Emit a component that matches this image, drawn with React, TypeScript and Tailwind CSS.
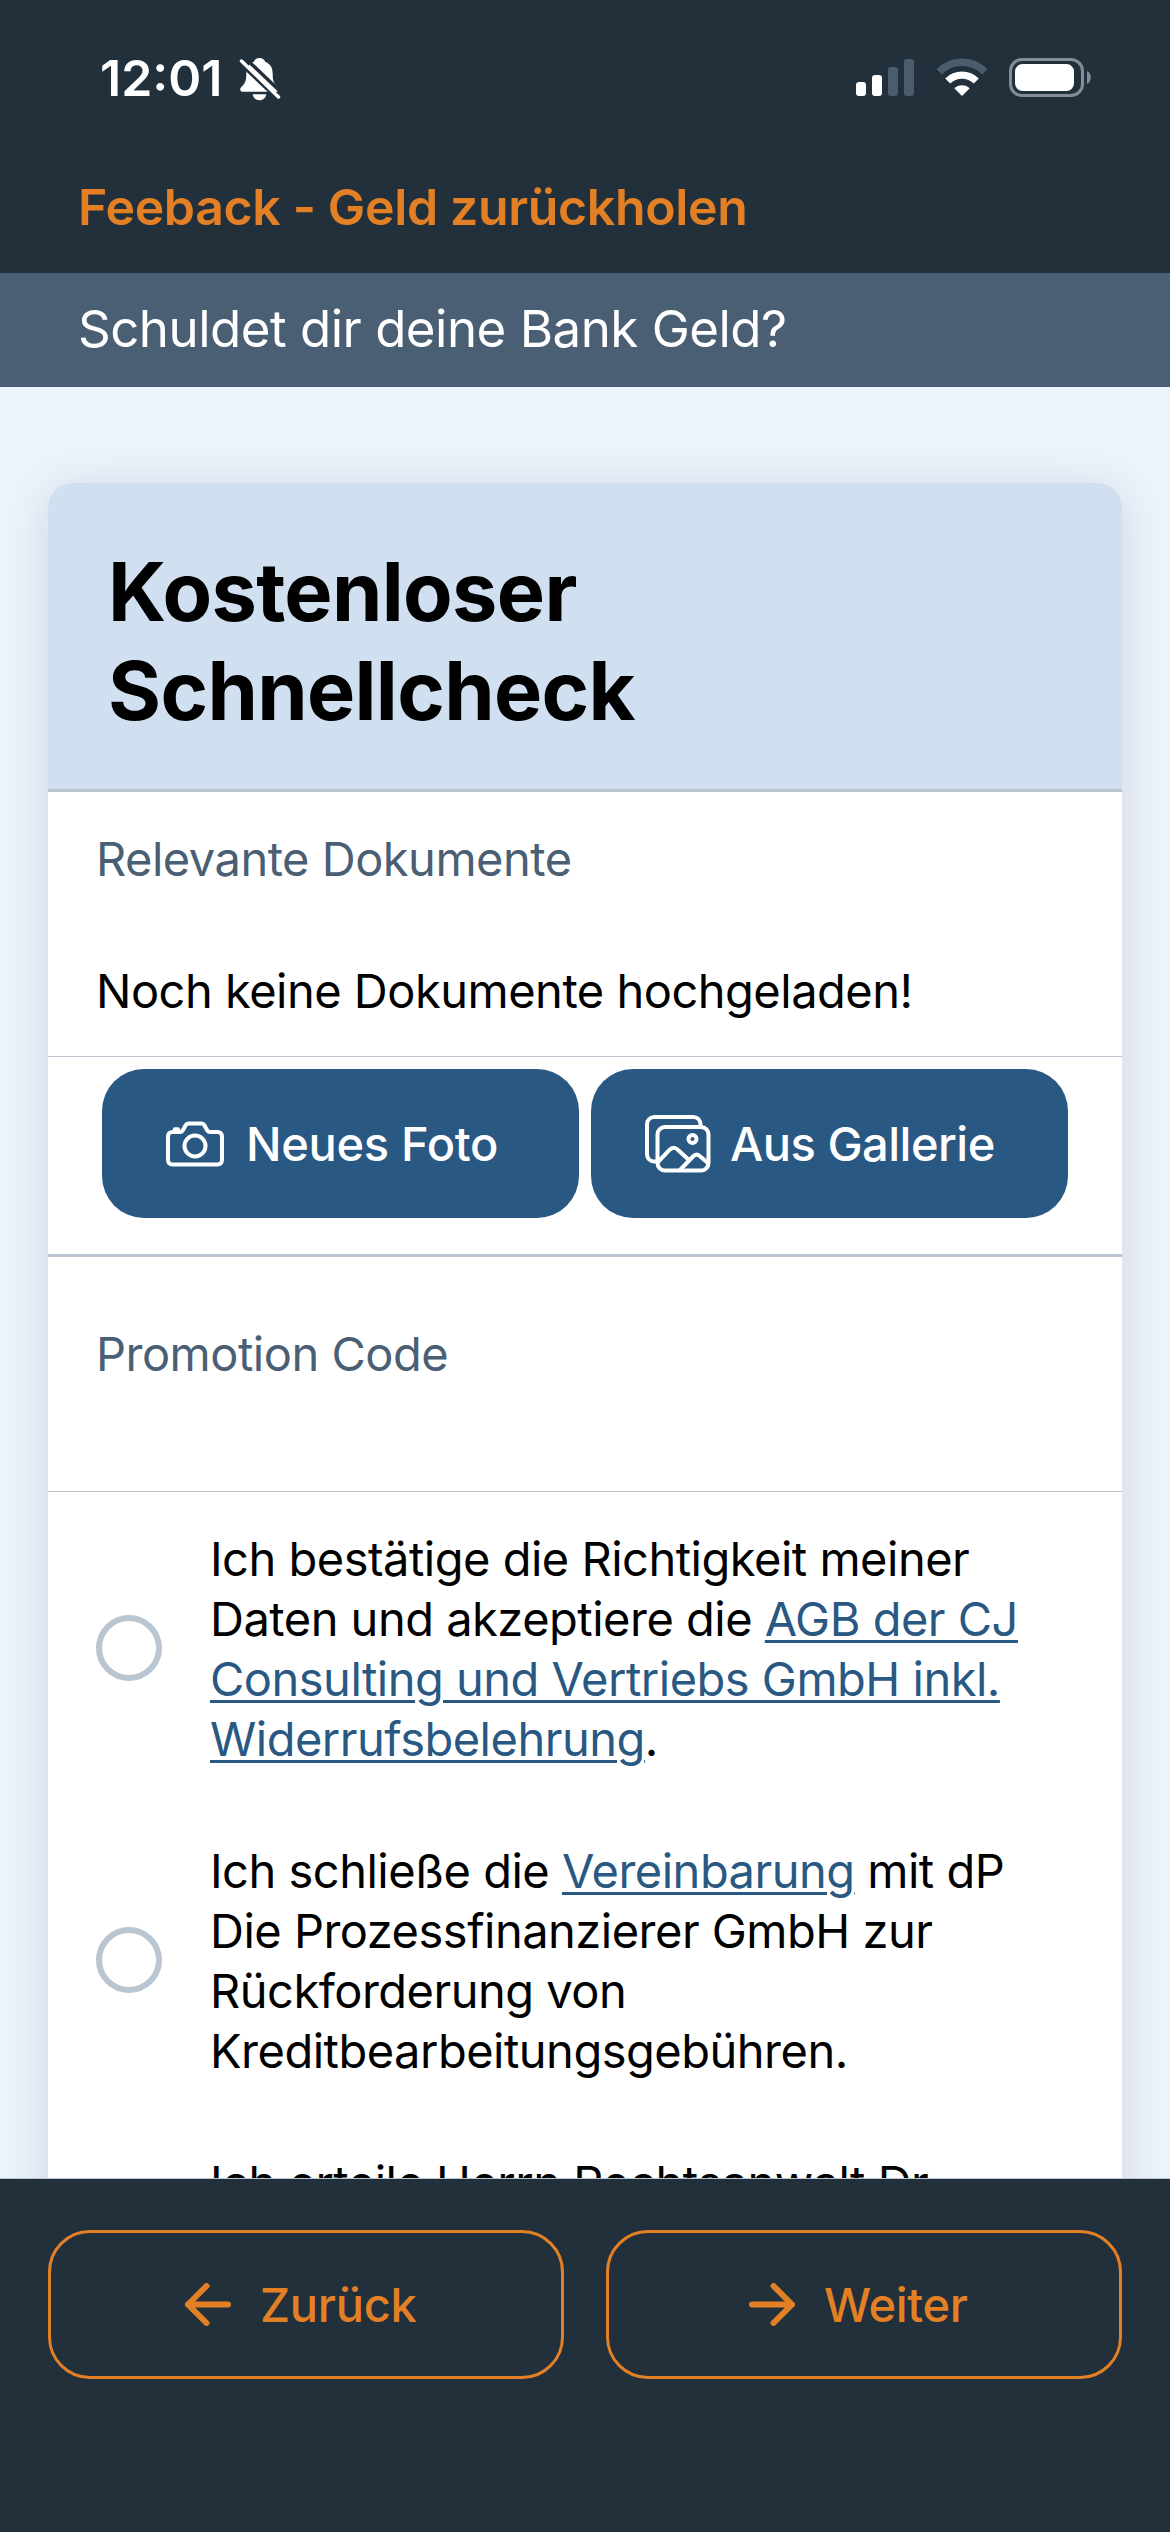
import type { ReactNode } from "react";

const agreements: { id: string; text: ReactNode }[] = [
  {
    id: "agb",
    text: (
      <>
        Ich bestätige die Richtigkeit meiner
        <br />
        Daten und akzeptiere die <TextLink>AGB der CJ</TextLink>
        <br />
        <TextLink>Consulting und Vertriebs GmbH inkl.</TextLink>
        <br />
        <TextLink>Widerrufsbelehrung</TextLink>.
      </>
    ),
  },
  {
    id: "vereinbarung",
    text: (
      <>
        Ich schließe die <TextLink>Vereinbarung</TextLink> mit dP
        <br />
        Die Prozessfinanzierer GmbH zur
        <br />
        Rückforderung von
        <br />
        Kreditbearbeitungsgebühren.
      </>
    ),
  },
  {
    id: "anwalt",
    text: <>Ich erteile Herrn Rechtsanwalt Dr.</>,
  },
];

function TextLink({ children }: { children: ReactNode }) {
  return (
    <a className="text-[#295883] underline decoration-[3px] underline-offset-[4px]">
      {children}
    </a>
  );
}

function BellOffIcon() {
  return (
    <svg className="h-[44px] w-[42px]" viewBox="0 0 42 44" fill="none">
      <path
        d="M20.5 1c-3 0-5.200 1.800-5.600 3.700C9.500 6.600 7.300 11 7.300 17c0 7-1.300 9.500-4.500 12.500C.2 32 1 34.800 4.200 34.800h32.600c3.200 0 4-2.800 1.400-5.300-3.200-3-4.500-5.500-4.500-12.500 0-6-2.200-10.400-7.600-12.300C25.700 2.800 23.500 1 20.500 1z"
        fill="#fff"
      />
      <path d="M13.700 37.200h13.600c-.5 3.600-3.200 6-6.800 6s-6.300-2.400-6.800-6z" fill="#fff" />
      <path d="M-2 3.500L41 44M4 -1L44 37" stroke="#22303c" strokeWidth="3.500" />
      <path d="M2.500 4L39.500 40" stroke="#fff" strokeWidth="3.500" strokeLinecap="round" />
    </svg>
  );
}

function SignalIcon() {
  return (
    <svg className="h-[38px] w-[58px]" viewBox="0 0 58 38">
      <rect x="0" y="24" width="10" height="14" rx="3" fill="#fff" />
      <rect x="16" y="17" width="10" height="21" rx="3" fill="#fff" />
      <rect x="32" y="9" width="10" height="29" rx="3" fill="#4b5c6d" />
      <rect x="48" y="1" width="10" height="37" rx="3" fill="#4b5c6d" />
    </svg>
  );
}

function WifiIcon() {
  return (
    <svg className="h-[38px] w-[52px]" viewBox="0 0 52 38" fill="none">
      <path d="M3.200 13.800a32 32 0 0 1 45.600 0" stroke="#4b5c6d" strokeWidth="7.500" />
      <path d="M11.700 23a20.500 20.500 0 0 1 28.600 0" stroke="#fff" strokeWidth="7.200" />
      <path d="M26 38l-7.700-7.700a11 11 0 0 1 15.400 0z" fill="#fff" />
    </svg>
  );
}

function BatteryIcon() {
  return (
    <svg className="h-[39px] w-[83px]" viewBox="0 0 83 39" fill="none">
      <rect x="1.500" y="1.500" width="72" height="36" rx="11.500" stroke="#848d97" strokeWidth="3" />
      <rect x="6" y="6" width="59" height="27" rx="7.500" fill="#fff" />
      <path d="M78 13c5 2 5 11 0 13z" fill="#848d97" />
    </svg>
  );
}

function CameraIcon() {
  return (
    <svg
      className="h-[46px] w-[58px]"
      viewBox="0 0 58 46"
      fill="none"
      stroke="#fff"
      strokeWidth="4"
      strokeLinejoin="round"
    >
      <path d="M6.500 11H14c1.500 0 2.300-.7 3-2l2.600-4.700C20.300 3 21 2.500 22.300 2.500h13.400c1.300 0 2 .5 2.700 1.800L41 9c.7 1.300 1.500 2 3 2h7.500c2.700 0 4.500 1.800 4.500 4.500V39c0 2.700-1.800 4.500-4.500 4.500h-45C3.800 43.500 2 41.700 2 39V15.500C2 12.800 3.800 11 6.500 11z" />
      <circle cx="29" cy="25" r="10.500" />
      <path d="M8.800 8.200h3.200" strokeLinecap="round" />
    </svg>
  );
}

function GalleryIcon() {
  return (
    <svg
      className="h-[58px] w-[66px]"
      viewBox="0 0 66 58"
      fill="none"
      stroke="#fff"
      strokeWidth="4"
      strokeLinejoin="round"
    >
      <path d="M12 46.500H9.500c-4.500 0-7.500-3-7.500-7.500V9.500C2 5 5 2 9.500 2H48c4.500 0 7.500 3 7.500 7.500V11" />
      <rect x="12.500" y="12" width="51" height="43.500" rx="7.500" />
      <circle cx="47.500" cy="24" r="4" />
      <path d="M12.500 47.500l12-12.600c2.800-2.900 5.600-2.900 8.300-.2L44 45M34.500 55.500l13.500-14c2.400-2.400 4.500-2.500 7-.3l8.500 7.300" />
    </svg>
  );
}

function ArrowIcon({ className = "" }: { className?: string }) {
  return (
    <svg
      className={`h-[43px] w-[46px] ${className}`}
      viewBox="0 0 46 43"
      fill="none"
      stroke="currentColor"
      strokeWidth="6"
      strokeLinecap="round"
      strokeLinejoin="round"
    >
      <path d="M24.500 3L43 21.500 24.500 40M43 21.500H3" />
    </svg>
  );
}

function StatusBar() {
  return (
    <div className="flex h-[154px] justify-between pl-[100px] pr-[78px]">
      <div className="flex">
        <span className="mt-[48px] w-[139px] text-[50px] leading-[60px] font-semibold tracking-[0px] text-white">
          12:01
        </span>
        <div className="mt-[57px]">
          <BellOffIcon />
        </div>
      </div>
      <div className="mt-[58px] flex h-[39px] items-start">
        <SignalIcon />
        <div className="ml-[22px]">
          <WifiIcon />
        </div>
        <div className="ml-[21px]">
          <BatteryIcon />
        </div>
      </div>
    </div>
  );
}

export default function App() {
  return (
    <div className="flex h-[2532px] w-[1170px] flex-col overflow-hidden bg-[#ebf3fb] font-['Inter',sans-serif] text-[47px] leading-[60px] tracking-[-0.5px] text-black">
      <header className="h-[273px] shrink-0 bg-[#22303c]">
        <StatusBar />
        <h1 className="pt-[23px] pl-[78px] text-[50px] font-semibold tracking-[-0.35px] whitespace-nowrap text-[#e38025]">
          Feeback - Geld zurückholen
        </h1>
      </header>

      <div className="h-[114px] shrink-0 bg-[#4b5f74] pt-[26px] pl-[78px] text-[51px] whitespace-nowrap text-white">
        Schuldet dir deine Bank Geld?
      </div>

      <main className="min-h-0 flex-1 overflow-hidden px-[48px] pt-[96px]">
        <div className="h-[2000px] rounded-t-[24px] bg-white shadow-[0_6px_48px_rgba(60,10,40,0.12)]">
          <div className="h-[309px] rounded-t-[24px] border-b-[3px] border-[#b9c5d1] bg-[#d1e0f0] pt-[60px] pl-[60px]">
            <h2 className="text-[81px] leading-[99px] font-bold tracking-[-0.65px]">
              Kostenloser
              <br />
              Schnellcheck
            </h2>
          </div>

          <section className="flex h-[265px] flex-col gap-[72px] border-b border-[#b9c5d1] pt-[37px] pl-[48px] whitespace-nowrap">
            <p className="text-[#4b5f74]">Relevante Dokumente</p>
            <p>Noch keine Dokumente hochgeladen!</p>
          </section>

          <div className="flex h-[200px] gap-[12px] border-b-[3px] border-[#b9c5d1] pt-[12px] pl-[54px] font-medium text-white">
            <button className="flex h-[149px] w-[477px] items-center rounded-[42px] bg-[#295883] pl-[64px] tracking-[-0.3px] whitespace-nowrap">
              <CameraIcon />
              <span className="ml-[22px]">Neues Foto</span>
            </button>
            <button className="flex h-[149px] w-[477px] items-center rounded-[42px] bg-[#295883] pl-[54px] tracking-[-0.5px] whitespace-nowrap">
              <GalleryIcon />
              <span className="ml-[19px]">Aus Gallerie</span>
            </button>
          </div>

          <section className="h-[235px] border-b border-[#b9c5d1] pt-[67px] pl-[48px] text-[#4b5f74]">
            Promotion Code
          </section>

          {agreements.map((item) => (
            <label key={item.id} className="flex items-center py-[36px] pl-[48px]">
              <span className="size-[66px] shrink-0 rounded-full border-[6px] border-[#b9c5d1]" />
              <span className="-mb-px ml-[48px] min-h-[241px] pt-px whitespace-nowrap">
                {item.text}
              </span>
            </label>
          ))}
        </div>
      </main>

      <footer className="h-[354px] shrink-0 border-t border-[#b9c5d1] bg-[#22303c]">
        <div className="flex gap-[42px] px-[48px] pt-[51px] font-medium tracking-[-0.3px] text-[#e38025]">
          <button className="flex h-[149px] w-[516px] items-center rounded-[42px] border-[3px] border-[#e38025] pl-[134px]">
            <ArrowIcon className="rotate-180" />
            <span className="ml-[29px]">Zurück</span>
          </button>
          <button className="flex h-[149px] w-[516px] items-center rounded-[42px] border-[3px] border-[#e38025] pl-[140px]">
            <ArrowIcon />
            <span className="ml-[29px]">Weiter</span>
          </button>
        </div>
      </footer>
    </div>
  );
}
